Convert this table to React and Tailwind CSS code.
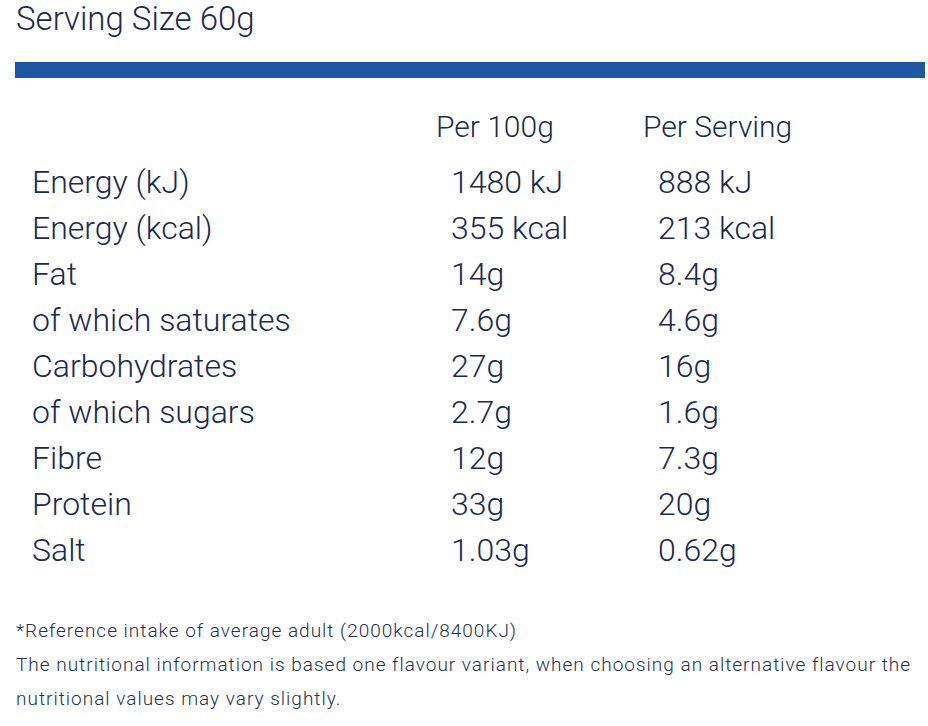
import React from "react";

const rows = [
  ["Energy (kJ)", "1480 kJ", "888 kJ"],
  ["Energy (kcal)", "355 kcal", "213 kcal"],
  ["Fat", "14g", "8.4g"],
  ["of which saturates", "7.6g", "4.6g"],
  ["Carbohydrates", "27g", "16g"],
  ["of which sugars", "2.7g", "1.6g"],
  ["Fibre", "12g", "7.3g"],
  ["Protein", "33g", "20g"],
  ["Salt", "1.03g", "0.62g"],
];

const App = () => {
  return (
    <div className="w-full min-h-[100vh] bg-white pl-[15px] pr-[3px] text-[#1b2a4f] font-['Roboto',sans-serif]">
      {/* heading */}
      <h2 className="text-[33px] leading-[38px] font-light pl-[1px]">Serving Size 60g</h2>

      {/* blue bar */}
      <div className="mt-[24px] h-[16px] bg-[#1f56a4]" />

      {/* column headers */}
      <div className="mt-[26px] flex text-[30px] leading-[46px] font-light">
        <div className="w-[421px]" />
        <div className="w-[207px]">Per 100g</div>
        <div>Per Serving</div>
      </div>

      {/* rows */}
      <div className="mt-[9px] pl-[17px] flex flex-col text-[32px] leading-[46px] font-light">
        {rows.map(([label, per100, perServing]) => (
          <div key={label} className="flex">
            <div className="w-[419px]">{label}</div>
            <div className="w-[207px]">{per100}</div>
            <div>{perServing}</div>
          </div>
        ))}
      </div>

      {/* footnotes */}
      <div className="mt-[41px] pl-[1px] text-[19px] leading-[34px] tracking-[1px] text-[#24314f] font-light">
        <p>*Reference intake of average adult (2000kcal/8400KJ)</p>
        <p>
          The nutritional information is based one flavour variant, when choosing an alternative flavour the
          nutritional values may vary slightly.
        </p>
      </div>
    </div>
  );
};

export default App;
